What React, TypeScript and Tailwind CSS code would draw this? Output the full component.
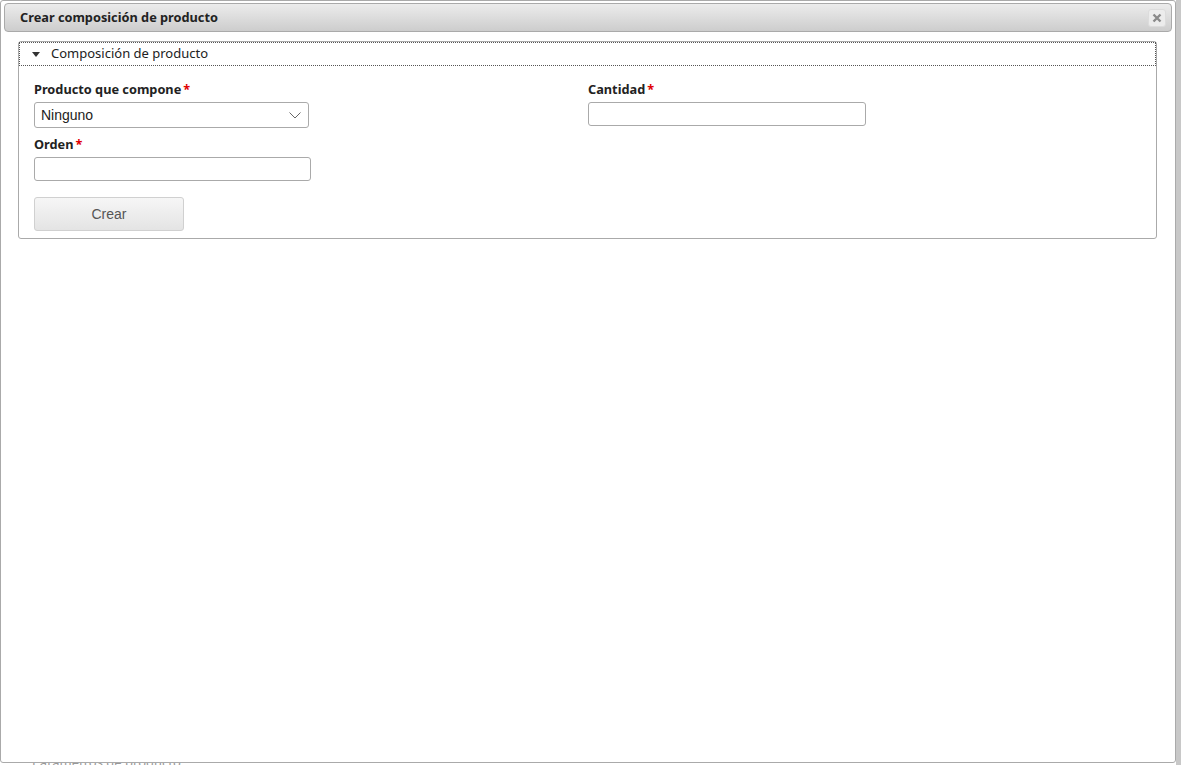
import React, { useState } from 'react';

const Req = () => <span className="text-[#e00000] ml-[2px]">*</span>;

const App: React.FC = () => {
    const [open, setOpen] = useState(true);

    return (
        <div className="relative w-[1181px] h-[765px] bg-white overflow-hidden font-['Noto_Sans','Open_Sans',sans-serif] text-[#222]">
            {/* page behind the dialog */}
            <div className="absolute left-[32px] top-[753px] text-[13px] text-[#999]">Parámetros de producto</div>
            <div className="absolute right-0 top-0 w-[5px] h-full bg-[#c8c8c8]" />

            <div className="relative flex flex-col w-[1176px] h-[763px] bg-white border border-[#aaa] rounded-[3px] pt-[2px] px-[3px]">
                {/* title bar */}
                <div className="flex items-center justify-between h-[29px] px-[15px] pr-[5px] border border-[#aaa] rounded-[4px] bg-gradient-to-b from-[#ececec] to-[#cdcdcd]">
                    <span className="text-[12.75px] font-bold text-[#222]">Crear composición de producto</span>
                    <button className="flex items-center justify-center w-[18px] h-[18px] rounded-[3px] bg-[#ececec] border border-[#dcdcdc]">
                        <svg width="10" height="10" viewBox="0 0 10 10">
                            <path d="M1.5 1.5 L8.5 8.5 M8.5 1.5 L1.5 8.5" stroke="#8a8a8a" strokeWidth="2.4" />
                        </svg>
                    </button>
                </div>

                {/* fieldset */}
                <div className="mt-[9px] ml-[14px] w-[1139px] border border-[#aaa] rounded-[3px]">
                    <button
                        onClick={() => setOpen(!open)}
                        className="flex items-center w-full h-[24px] pl-[12px] border border-dotted border-[#555] text-[13px] text-[#222]"
                    >
                        <svg width="8" height="5" viewBox="0 0 8 5" className={open ? '' : '-rotate-90'}>
                            <path d="M0 0 L8 0 L4 5 Z" fill="#333" />
                        </svg>
                        <span className="ml-[11px]">Composición de producto</span>
                    </button>

                    {open && (
                        <div className="px-[15px] pt-[14px] pb-[7px]">
                            <div className="grid grid-cols-[554px_1fr]">
                                <div>
                                    <label className="block text-[12.75px] font-bold leading-[18px]">Producto que compone<Req /></label>
                                    <div className="relative mt-[4px] w-[275px] h-[26px] border border-[#aaa] rounded-[3px] flex items-center px-[6px] font-['Liberation_Sans',Arial,sans-serif] text-[14px] text-[#222]">
                                        Ninguno
                                        <svg width="12" height="7" viewBox="0 0 12 7" className="absolute right-[7px] top-[9px]">
                                            <path d="M0.5 0.5 L6 6 L11.5 0.5" stroke="#666" strokeWidth="1" fill="none" />
                                        </svg>
                                    </div>
                                    <label className="block mt-[7px] text-[12.75px] font-bold leading-[18px]">Orden<Req /></label>
                                    <input className="block mt-[4px] w-[277px] h-[24px] border border-[#aaa] rounded-[3px] outline-none" />
                                </div>
                                <div>
                                    <label className="block text-[12.75px] font-bold leading-[18px]">Cantidad<Req /></label>
                                    <input className="block mt-[4px] w-[278px] h-[24px] border border-[#aaa] rounded-[3px] outline-none" />
                                </div>
                            </div>
                            <button className="mt-[16px] w-[150px] h-[34px] border border-[#d0d0d0] rounded-[3px] bg-gradient-to-b from-[#f6f6f6] to-[#e4e4e4] font-['Liberation_Sans',Arial,sans-serif] text-[14px] text-[#555]">
                                Crear
                            </button>
                        </div>
                    )}
                </div>
            </div>
        </div>
    );
};

export default App;
